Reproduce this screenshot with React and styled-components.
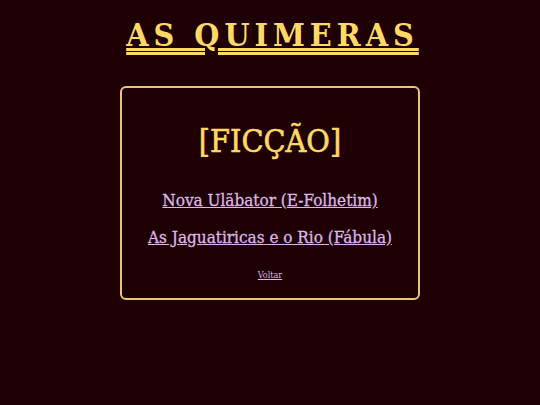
import React from 'react'
import styled, { createGlobalStyle } from 'styled-components'

const GlobalStyle = createGlobalStyle`
    html, body {
        margin: 0;
        padding: 0;
        background: #1e0004;
    }
    body {
        font-family: "DejaVu Serif", "Liberation Serif", serif;
        font-stretch: condensed;
    }
`;

const Page = styled.div`
    display: flex;
    flex-direction: column;
    align-items: center;
    padding-top: 15px;
`;

const Title = styled.h1`
    margin: 0;
    padding-left: 5px;
    color: #ffd966;
    font-size: 32px;
    font-weight: bold;
    letter-spacing: 5px;
    line-height: 40px;
    text-decoration: underline double;
    text-decoration-thickness: 3px;
    text-underline-offset: 2px;
`;

const Card = styled.div`
    margin-top: 31px;
    width: 296px;
    height: 210px;
    border: 2px solid #e8c878;
    border-radius: 6px;
    display: flex;
    flex-direction: column;
    align-items: center;
`;

const Heading = styled.h2`
    margin: 31px 0 0;
    color: #ffd966;
    font-size: 32px;
    font-weight: normal;
    line-height: 44px;
    -webkit-text-stroke: 0.6px #ffd966;
`;

const Link = styled.a`
    color: #dcb6e6;
    font-size: ${({ $small }) => ($small ? '9px' : '17px')};
    line-height: ${({ $small }) => ($small ? '12px' : '24px')};
    margin-top: ${({ $gap }) => $gap}px;
    text-decoration: underline;
    -webkit-text-stroke: ${({ $small }) => ($small ? '0' : '0.3px')} #dcb6e6;
`;

const App = () => {
    return (
        <>
            <GlobalStyle />
            <Page>
                <Title>AS QUIMERAS</Title>
                <Card>
                    <Heading>[FICÇÃO]</Heading>
                    <Link href="#" $gap={25}>Nova Ulãbator (E-Folhetim)</Link>
                    <Link href="#" $gap={13}>As Jaguatiricas e o Rio (Fábula)</Link>
                    <Link href="#" $small $gap={20}>Voltar</Link>
                </Card>
            </Page>
        </>
    )
}

export default App
